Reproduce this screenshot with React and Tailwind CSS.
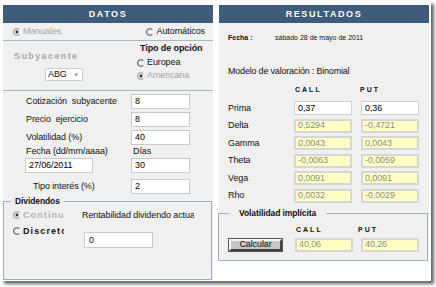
import React from "react";

function Radio({ checked, disabled }) {
  const c = disabled ? "#9a9a9a" : "#5a5a5a";
  return (
    <svg width="8" height="8" viewBox="0 0 8 8" className="shrink-0">
      <path d="M6.3 1.7 A3.3 3.3 0 1 0 6.3 6.3" fill="none" stroke={c} strokeWidth="1.1" />
      {checked && <circle cx="4" cy="4" r="1.4" fill="#2a2a2a" />}
    </svg>
  );
}

function WBox({ children, className }) {
  return (
    <div
      className={
        "h-[15px] bg-white border border-[#c9c9c9] flex items-center pl-[3px] text-[9px] text-black " +
        (className || "")
      }
    >
      {children}
    </div>
  );
}

function YBox({ children }) {
  return (
    <div className="h-[14px] w-[58px] bg-[#ffffc4] border-2 border-[#d6d6d6] flex items-center pl-[2px] text-[9px] text-[#8e8e8e]">
      {children}
    </div>
  );
}

function InRow({ label, value, className }) {
  return (
    <div className={"flex items-center h-[15px] " + (className || "")}>
      <div className="w-[106px] pl-[1px] overflow-hidden whitespace-pre">{label}</div>
      <WBox className="w-[59px]">{value}</WBox>
    </div>
  );
}

function GreekRow({ label, call, put, white }) {
  return (
    <div className="flex items-center h-[14px]">
      <div className="w-[66px]">{label}</div>
      {white ? (
        <>
          <div className="h-[14px] w-[58px] bg-white border border-[#cfcfcf] flex items-center pl-[3px] text-black">{call}</div>
          <div className="h-[14px] w-[58px] ml-[9px] bg-white border border-[#cfcfcf] flex items-center pl-[3px] text-black">{put}</div>
        </>
      ) : (
        <>
          <YBox>{call}</YBox>
          <div className="ml-[9px]">
            <YBox>{put}</YBox>
          </div>
        </>
      )}
    </div>
  );
}

export default function App() {
  return (
    <div className="w-[436px] h-[287px] bg-white font-['Liberation_Sans',Arial,sans-serif] text-[9px] leading-none text-[#111] tracking-[-0.1px]">
      <div className="w-[430px] h-[280px] ml-[1px] mt-[1px] bg-white shadow-[3px_3px_3px_rgba(0,0,0,0.6)] flex items-start pl-[2px] pt-[4px]">
        {/* LEFT PANEL */}
        <div className="w-[210px] h-[275px] flex flex-col bg-[#f0f0f0]">
          <div className="h-[18px] shrink-0 bg-[#3e5b7c] text-white text-[9px] font-bold tracking-[1.6px] flex items-center justify-center">
            DATOS
          </div>
          <div className="h-[18px] shrink-0 flex items-center justify-between pl-[10px] pr-[8px] border-b border-[#a9b7c6]">
            <div className="flex items-center gap-[2px] text-[#a4a4a4]">
              <Radio checked disabled />
              <span>Manuales</span>
            </div>
            <div className="flex items-center gap-[3px]">
              <Radio />
              <span>Automáticos</span>
            </div>
          </div>
          <div className="h-[50px] shrink-0 flex border-b border-[#a9b7c6]">
            <div className="w-[134px] pl-[11px] pt-[10px] flex flex-col">
              <div className="h-[11px] flex items-center font-bold text-[#a6a6a6] tracking-[1.4px]">Subyacente</div>
              <div className="ml-[31px] mt-[6px] w-[38px] h-[13px] bg-white border border-[#cdcdcd] flex items-center justify-between pl-[2px] pr-[3px]">
                <span>ABG</span>
                <span className="text-[6px] text-[#9a9a9a]">▼</span>
              </div>
            </div>
            <div className="flex flex-col pt-[2px]">
              <div className="h-[11px] ml-[3px] flex items-center font-bold">Tipo de opción</div>
              <div className="h-[13px] mt-[2px] flex items-center gap-[2px]">
                <Radio />
                <span>Europea</span>
              </div>
              <div className="h-[13px] flex items-center gap-[2px] text-[#a4a4a4]">
                <Radio checked disabled />
                <span>Americana</span>
              </div>
            </div>
          </div>
          <div className="flex flex-col pl-[22px] pt-[3px]">
            <InRow label="Cotización  subyacente" value="8" />
            <InRow label="Precio  ejercicio" value="8" className="mt-[3px]" />
            <InRow label="Volatilidad (%)" value="40" className="mt-[3px]" />
            <div className="flex items-center h-[11px] mt-[1px]">
              <div className="w-[108px] pl-[1px]">Fecha (dd/mm/aaaa)</div>
              <div>Días</div>
            </div>
            <div className="flex items-center h-[15px] mt-[1px]">
              <WBox className="w-[68px]">27/06/2011</WBox>
              <WBox className="w-[59px] ml-[38px]">30</WBox>
            </div>
            <InRow label="   Tipo interés (%)" value="2" className="mt-[6px]" />
          </div>
          <fieldset className="mt-auto mr-[1px] border border-[#9eadbe] h-[84px] flex">
            <legend className="ml-[7px] px-[4px] font-bold text-[8.5px] leading-[10px]">Dividendos</legend>
            <div className="flex w-full">
              <div className="w-[60px] pl-[9px] pt-[3px] flex flex-col">
                <div className="h-[12px] flex items-center gap-[2px]">
                  <Radio checked disabled />
                  <span className="w-[42px] overflow-hidden whitespace-nowrap font-bold text-[#b0b0b0] tracking-[1.1px]">Continuo</span>
                </div>
                <div className="h-[12px] mt-[4px] flex items-center gap-[2px]">
                  <Radio />
                  <span className="w-[42px] overflow-hidden whitespace-nowrap font-bold tracking-[1.1px]">Discreto</span>
                </div>
              </div>
              <div className="ml-[18px] pt-[3px] flex flex-col">
                <div className="h-[12px] w-[112px] overflow-hidden whitespace-nowrap flex items-center">
                  Rentabilidad dividendo actual
                </div>
                <div className="ml-[2px] mt-[11px] w-[69px] h-[16px] bg-white border border-[#c9c9c9] flex items-center pl-[4px]">
                  0
                </div>
              </div>
            </div>
          </fieldset>
        </div>

        {/* RIGHT PANEL */}
        <div className="w-[210px] ml-[6px] flex flex-col">
          <div className="h-[18px] shrink-0 bg-[#3e5b7c] text-white text-[9px] font-bold tracking-[1.6px] flex items-center justify-center">
            RESULTADOS
          </div>
          <div className="bg-[#f0f0f0] flex flex-col">
            <div className="h-[9px] mt-[10px] pl-[9px] flex items-center text-[7px] tracking-normal">
              <span className="w-[47px] font-bold">Fecha :</span>
              <span>sábado 28 de mayo de 2011</span>
            </div>
            <div className="h-[11px] mt-[24px] pl-[9px] flex items-center tracking-[-0.2px]">
              Modelo de valoración : Binomial
            </div>
            <div className="h-[8px] mt-[8px] pl-[76px] flex items-center text-[7px] font-bold tracking-[2px]">
              <span className="w-[65px]">CALL</span>
              <span>PUT</span>
            </div>
            <div className="mt-[8px] pl-[9px] flex flex-col gap-[3.5px]">
              <GreekRow label="Prima" call="0,37" put="0,36" white />
              <GreekRow label="Delta" call="0,5294" put="-0,4721" />
              <GreekRow label="Gamma" call="0,0043" put="0,0043" />
              <GreekRow label="Theta" call="-0,0063" put="-0,0059" />
              <GreekRow label="Vega" call="0,0091" put="0,0091" />
              <GreekRow label="Rho" call="0,0032" put="-0,0029" />
            </div>
            <fieldset className="mt-[6px] -ml-[1px] mr-[1px] border border-[#9eadbe] pb-[8px]">
              <legend className="ml-[10px] px-[10px] font-bold text-[8.5px] leading-[9px]">Volatilidad implícita</legend>
              <div className="h-[8px] mt-[8px] pl-[77px] flex items-center text-[7px] font-bold tracking-[2px]">
                <span className="w-[62px]">CALL</span>
                <span>PUT</span>
              </div>
              <div className="mt-[4px] h-[14px] pl-[10px] flex items-center">
                <div className="w-[53px] h-[12px] bg-[#c6c6c6] border-2 border-t-[#f4f4f4] border-l-[#f4f4f4] border-r-[#404040] border-b-[#404040] outline outline-1 outline-[#555] flex items-center justify-center">
                  Calcular
                </div>
                <div className="ml-[13px]">
                  <YBox>40,06</YBox>
                </div>
                <div className="ml-[8px]">
                  <YBox>40,26</YBox>
                </div>
              </div>
            </fieldset>
          </div>
        </div>
      </div>
    </div>
  );
}
